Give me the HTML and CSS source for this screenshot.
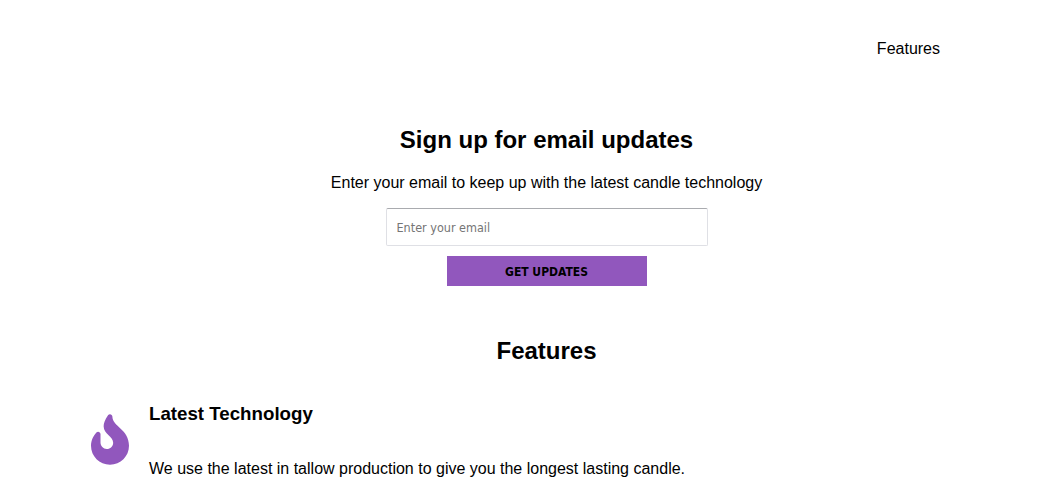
FILE: index.html
```html
<!DOCTYPE html>
<html lang="en">
<head>
<meta charset="utf-8">
<title>Candles</title>
<link rel="stylesheet" href="styles.css">
</head>
<body>
<header class="header"><nav><a class="nav-link" href="#features">Features</a></nav></header>
<main>
<section class="signup">
<h2 class="title">Sign up for email updates</h2>
<p class="intro">Enter your email to keep up with the latest candle technology</p>
<form class="form">
<input class="email" type="email" placeholder="Enter your email">
<button class="submit" type="button">GET UPDATES</button>
</form>
</section>
<section class="features" id="features">
<h2 class="title">Features</h2>
<div class="feature">
<svg class="flame" viewBox="0 0 384 512" aria-hidden="true"><path d="M216 23.86c0-23.8-30.65-32.77-44.15-13.04C48 191.85 224 200 224 288c0 35.63-29.11 64.46-64.85 63.99-35.17-.45-63.15-29.77-63.15-64.94v-85.51c0-21.7-26.47-32.23-41.43-16.5C27.8 213.16 0 261.33 0 320c0 105.87 86.13 192 192 192s192-86.13 192-192c0-170.29-168-193-168-296.14z"/></svg>
<div>
<h3 class="feature-title">Latest Technology</h3>
<p class="feature-text">We use the latest in tallow production to give you the longest lasting candle.</p>
</div>
</div>
</section>
</main>
</body>
</html>
```
FILE: styles.css
```css
* { box-sizing: border-box; }
body { margin: 0; height: 486px; overflow: hidden; background: #fff; color: #000; font: 16px/18px "Liberation Sans", Arial, sans-serif; }
h2, h3, p { margin: 0; }
.header { display: flex; justify-content: flex-end; padding: 40px 115px 0 0; }
.nav-link { display: block; color: inherit; text-decoration: none; }
.signup { padding: 68px 0 0 38px; text-align: center; }
.title { font-size: 24px; line-height: 28px; text-align: center; }
.intro { margin-top: 20px; }
.form { display: flex; flex-direction: column; align-items: center; gap: 10px; margin-top: 16px; }
.email { width: 322px; height: 38px; padding: 0 10px; border: 1px solid #dfe0e5; border-top-color: #a9abaf; border-radius: 2px; font: 12.5px "DejaVu Sans Condensed", "DejaVu Sans", sans-serif; font-stretch: condensed; }
.email::placeholder { color: #757575; }
.submit { width: 200px; height: 30px; padding: 2px 0 0; border: 0; background: #9157bd; color: #000; font: bold 12px "DejaVu Sans Condensed", "DejaVu Sans", sans-serif; font-stretch: condensed; }
.features { padding-top: 51px; }
.features .title { padding-left: 38px; }
.feature { display: flex; gap: 20px; margin-top: 38px; padding-left: 91px; }
.flame { width: 38px; height: 51px; margin-top: 11px; fill: #9157bd; }
.feature-title { font-size: 18.72px; line-height: 22px; }
.feature-text { margin-top: 35px; }
```
